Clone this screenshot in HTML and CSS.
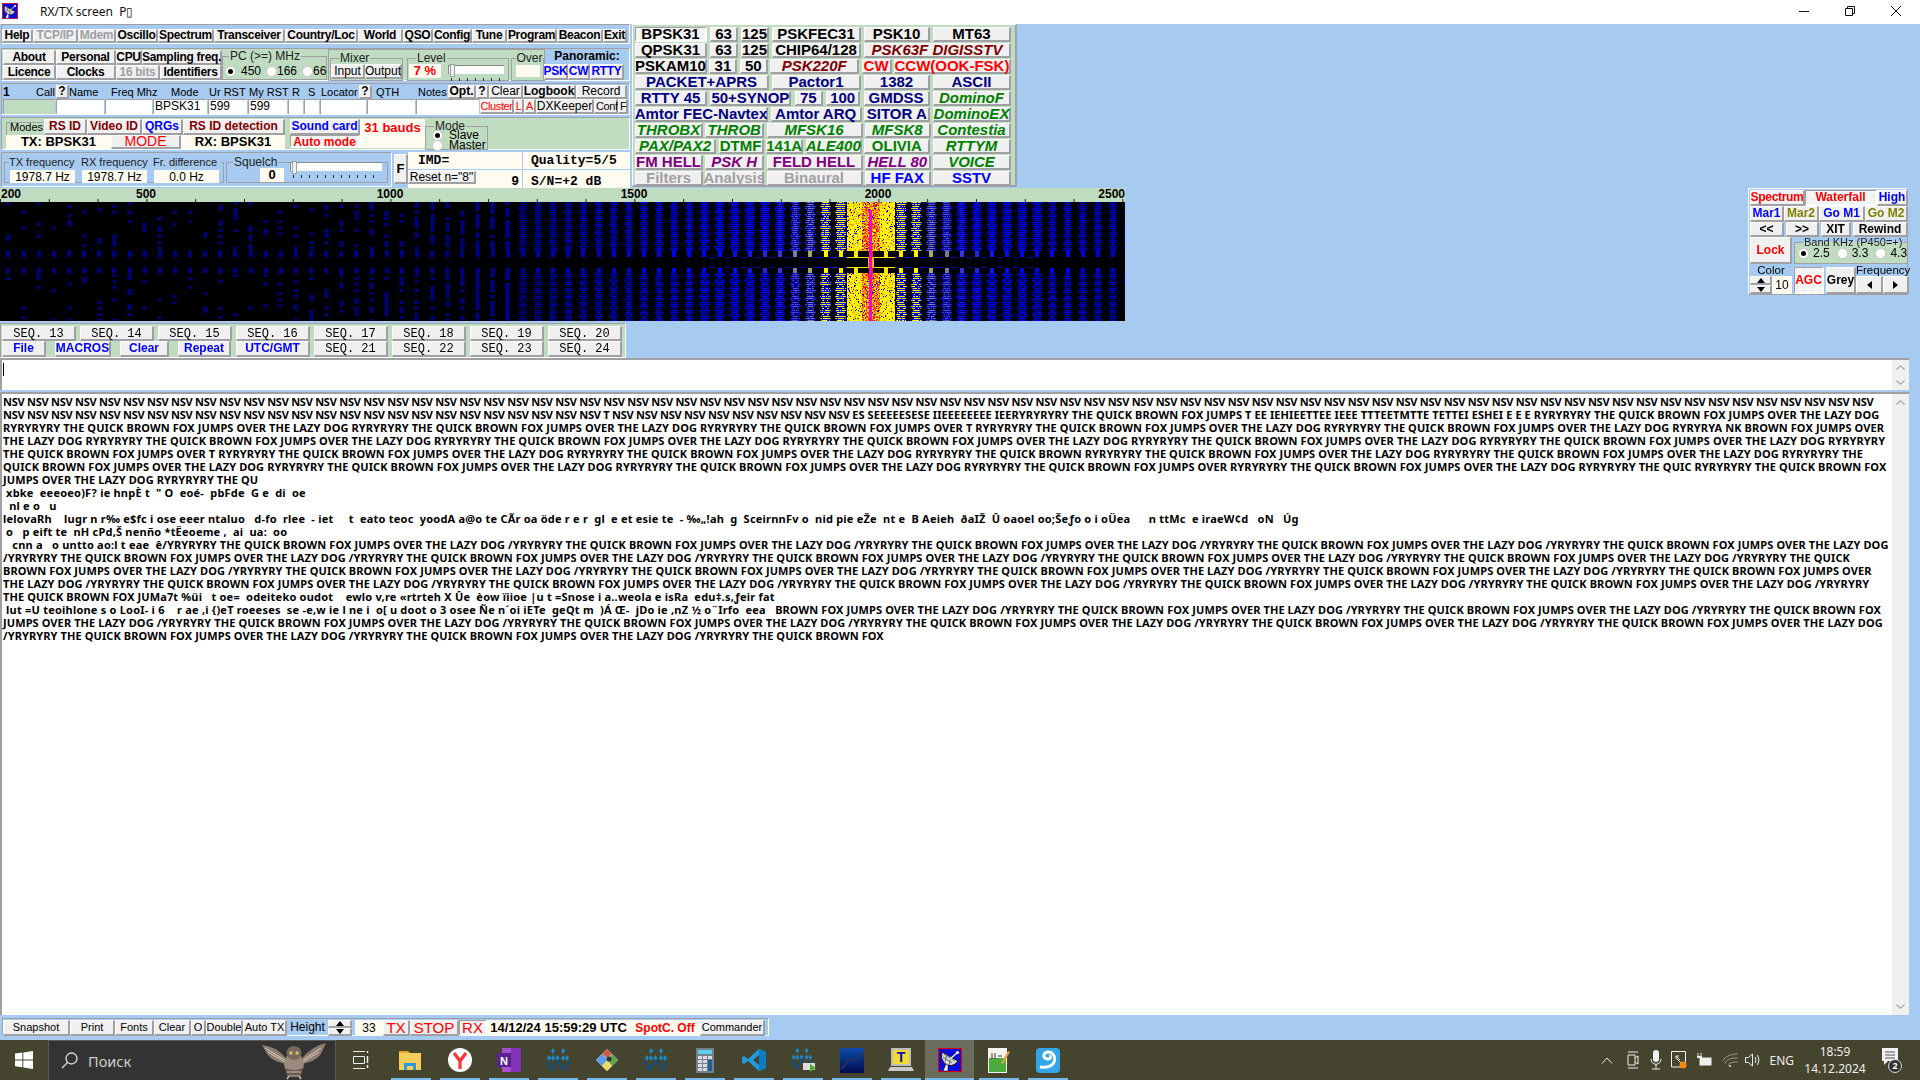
FILE: index.html
```html
<!DOCTYPE html>
<html lang="en">
<head>
<meta charset="utf-8">
<title>RX/TX screen</title>
<link rel="stylesheet" href="styles.css">
</head>
<body>
<svg class="defs" width="0" height="0" aria-hidden="true">
  <symbol id="dish" viewBox="0 0 24 24">
    <rect x="0.5" y="0.5" width="23" height="23" fill="#0c0ce0" stroke="#e00000"/>
    <path d="M4 4 L20 13 Q14 21 6 15 Q2 10 4 4Z" fill="#d8d8d8" stroke="#000" stroke-width=".8"/>
    <path d="M6 6 L17 13 M5 9 L14 15 M9 5 L7 14 M13 8 L11 17" stroke="#555" stroke-width=".8"/>
    <path d="M12 11 L19 5" stroke="#fff" stroke-width="1.2"/>
    <circle cx="19.5" cy="4.5" r="1.6" fill="#fff"/>
    <path d="M8 16 L5 23 H10 L10 18" fill="#fff" stroke="#000" stroke-width=".6"/>
  </symbol>
  <symbol id="wsjt" viewBox="0 0 26 26">
    <g fill="#1e88c8">
      <path d="M8 1l2 3-2 3-2-3zM18 1l2 3-2 3-2-3zM4 8l2 3-2 3-2-3zM8 8l2 3-2 3-2-3zM12.500 8l2 3-2 3-2-3zM18 8l2 3-2 3-2-3zM22 8l2 3-2 3-2-3z"/>
    </g>
    <path d="M1 15l6 10 6-10 6 10 6-10-2-1-4 7-6-9-6 9-4-7z" fill="#0f4f86"/>
  </symbol>
  <symbol id="chev-up" viewBox="0 0 9 5"><path d="M.5 4.500L4.500 .8L8.500 4.500" fill="none" stroke="#a8a8a8" stroke-width="1.200"/></symbol>
  <symbol id="chev-down" viewBox="0 0 9 5"><path d="M.5 .5L4.500 4.200L8.500 .5" fill="none" stroke="#a8a8a8" stroke-width="1.200"/></symbol>
  <symbol id="tri-up" viewBox="0 0 8 5"><path d="M0 5L4 0L8 5Z"/></symbol>
  <symbol id="tri-down" viewBox="0 0 8 5"><path d="M0 0L4 5L8 0Z"/></symbol>
  <symbol id="tri-left" viewBox="0 0 5 8"><path d="M5 0L0 4L5 8Z"/></symbol>
  <symbol id="tri-right" viewBox="0 0 5 8"><path d="M0 0L5 4L0 8Z"/></symbol>
</svg>

<header class="titlebar">
  <svg class="title-icon" width="16" height="16"><use href="#dish"/></svg>
  <span class="title-text">RX/TX screen&nbsp; P▯</span>
  <div class="winctl">
    <svg width="10" height="10" viewBox="0 0 10 10"><path d="M0 5.500H10" stroke="#111"/></svg>
    <svg width="10" height="10" viewBox="0 0 10 10"><path d="M.5 2.500H7.500V9.500H.5ZM2.500 2.500V.5H9.500V7.500H7.500" fill="none" stroke="#111"/></svg>
    <svg width="10" height="10" viewBox="0 0 10 10"><path d="M0 0L10 10M10 0L0 10" stroke="#111"/></svg>
  </div>
</header>

<div class="upper">
  <div class="upper-left">
    <div class="top-row">
      <div class="left-panels">

        <nav class="panel menu-panel">
          <div class="menu-row">
            <button class="b">Help</button><button class="b off">TCP/IP</button><button class="b off">Mdem</button><button class="b">Oscillo</button><button class="b">Spectrum</button><button class="b">Transceiver</button><button class="b">Country/Loc</button><button class="b">World</button><button class="b">QSO</button><button class="b">Config</button><button class="b">Tune</button><button class="b">Program</button><button class="b">Beacon</button><button class="b">Exit</button>
          </div>
        </nav>

        <section class="panel green info-panel">
          <div class="info-btns">
            <div class="info-a"><button class="b">About</button><button class="b">Personal</button><button class="b">CPU</button><button class="b">Sampling freq.</button></div>
            <div class="info-b"><button class="b">Licence</button><button class="b">Clocks</button><button class="b off">16 bits</button><button class="b">Identifiers</button></div>
          </div>
          <fieldset class="grp pc-grp">
            <legend>PC (&gt;=) MHz</legend>
            <div class="radios pc-radios">
              <span class="radio on"></span><span>450</span><span class="radio"></span><span>166</span><span class="radio"></span><span>66</span>
            </div>
          </fieldset>
          <div class="sound-box">
            <fieldset class="grp mixer-grp">
              <legend>Mixer</legend>
              <div class="mixer-btns"><button class="b plain">Input</button><button class="b plain">Output</button></div>
            </fieldset>
            <fieldset class="grp level-grp">
              <legend>Level</legend>
              <div class="level-row">
                <span class="val red level-val">7 %</span>
                <div class="slider level-slider"><i></i></div>
              </div>
            </fieldset>
            <fieldset class="grp over-grp">
              <legend>Over</legend>
              <span class="val over-val"></span>
            </fieldset>
          </div>
          <div class="panoramic">
            <div class="pano-title">Panoramic:</div>
            <div class="pano-btns"><button class="b blue">PSK</button><button class="b blue">CW</button><button class="b blue">RTTY</button></div>
          </div>
        </section>

        <section class="panel log-panel">
          <div class="log-labels">
            <span class="call-cell"><b>1</b><span>Call</span></span><button class="b">?</button><span class="lbl">Name</span><span class="lbl">Freq Mhz</span><span class="lbl">Mode</span><span class="lbl">Ur RST</span><span class="lbl">My RST</span><span class="lbl">R</span><span class="lbl">S</span><span class="lbl">Locator</span><button class="b">?</button><span class="lbl ind">QTH</span><span class="lbl">Notes</span><button class="b">Opt.</button><button class="b">?</button><button class="b plain">Clear</button><button class="b">Logbook</button><button class="b plain">Record</button>
          </div>
          <div class="log-fields">
            <span class="field dim"></span><span class="field"></span><span class="field"></span><span class="field">BPSK31</span><span class="field">599</span><span class="field">599</span><span class="field"></span><span class="field"></span><span class="field"></span><span class="field"></span><span class="field"></span><button class="b plain redt small">Cluster</button><button class="b plain redt small">L</button><button class="b plain redt small">A</button><button class="b plain">DXKeeper</button><button class="b plain left small">Conf</button><button class="b plain left small">F</button>
          </div>
        </section>

        <section class="panel green mode-panel">
          <div class="mode-a">
            <div class="mode-a1">
              <span class="modes-lbl">Modes</span><button class="b maroon">RS ID</button><button class="b maroon">Video ID</button><button class="b blue">QRGs</button><button class="b maroon">RS ID detection</button>
            </div>
            <div class="mode-a2">
              <span class="val strong">TX: BPSK31</span><button class="b plain redt big">MODE</button><span class="val strong">RX: BPSK31</span>
            </div>
          </div>
          <div class="mode-b">
            <button class="b blue">Sound card</button><span class="val red strong pushed">31 bauds</span>
            <button class="b pressed redt">Auto mode</button><span class="val"></span>
          </div>
          <fieldset class="grp mode-grp">
            <legend>Mode</legend>
            <div class="radios col"><span class="radline"><span class="radio on"></span>Slave</span><span class="radline"><span class="radio"></span>Master</span></div>
          </fieldset>
        </section>

        <section class="tx-row">
          <div class="panel tx-panel">
            <fieldset class="grp freq-grp">
              <legend class="freq-legend"><span>TX frequency</span><span>RX frequency</span><span>Fr. difference</span></legend>
              <div class="freq-vals"><span class="val">1978.7 Hz</span><span class="val">1978.7 Hz</span><span class="val">0.0 Hz</span></div>
            </fieldset>
            <fieldset class="grp squelch-grp">
              <legend>Squelch</legend>
              <div class="squelch-row"><span class="val strong">0</span><div class="slider squelch-slider"><i></i></div></div>
            </fieldset>
          </div>
          <button class="b f-btn">F</button>
          <div class="imd">
            <span class="val mono imd-a">IMD=</span><span class="val mono imd-b">Quality=5/5</span>
            <div class="imd-c"><button class="b plain">Reset n="8"</button><span class="val mono nine">9</span></div><span class="val mono imd-b imd-low">S/N=+2 dB</span>
          </div>
        </section>
      </div>

      <section class="mode-grid">
        <div class="mg r1"><button class="b k pressed">BPSK31</button><button class="b k">63</button><button class="b k">125</button><button class="b k">PSKFEC31</button><button class="b k">PSK10</button><button class="b k">MT63</button></div>
        <div class="mg r2"><button class="b k">QPSK31</button><button class="b k">63</button><button class="b k">125</button><button class="b k">CHIP64/128</button><button class="b dr it">PSK63F DIGISSTV</button></div>
        <div class="mg r3"><button class="b k">PSKAM10</button><button class="b k">31</button><button class="b k">50</button><button class="b dr it">PSK220F</button><button class="b rd">CW</button><button class="b rd">CCW(OOK-FSK)</button></div>
        <div class="mg r4"><button class="b nv">PACKET+APRS</button><button class="b nv">Pactor1</button><button class="b nv">1382</button><button class="b nv">ASCII</button></div>
        <div class="mg r5"><button class="b nv">RTTY 45</button><button class="b nv">50+SYNOP</button><button class="b nv">75</button><button class="b nv">100</button><button class="b nv">GMDSS</button><button class="b gr it">DominoF</button></div>
        <div class="mg r6"><button class="b nv">Amtor FEC-Navtex</button><button class="b nv">Amtor ARQ</button><button class="b nv">SITOR A</button><button class="b gr it">DominoEX</button></div>
        <div class="mg r7"><button class="b gr it">THROBX</button><button class="b gr it">THROB</button><button class="b gr it">MFSK16</button><button class="b gr it">MFSK8</button><button class="b gr it">Contestia</button></div>
        <div class="mg r8"><button class="b gr it">PAX/PAX2</button><button class="b gr">DTMF</button><button class="b gr">141A</button><button class="b gr it">ALE400</button><button class="b gr">OLIVIA</button><button class="b gr it">RTTYM</button></div>
        <div class="mg r7"><button class="b pu">FM HELL</button><button class="b pu it">PSK H</button><button class="b pu">FELD HELL</button><button class="b pu it">HELL 80</button><button class="b gr it">VOICE</button></div>
        <div class="mg r7"><button class="b gy">Filters</button><button class="b gy">Analysis</button><button class="b gy">Binaural</button><button class="b bl">HF FAX</button><button class="b bl">SSTV</button></div>
      </section>
    </div>

    <div class="ruler">
      <span class="r0">200</span><span class="rc">500</span><span class="rc">1000</span><span class="rc">1500</span><span class="rc">2000</span><span class="rl">2500</span>
    </div>
    <canvas id="wf" class="waterfall" width="1125" height="119"></canvas>

    <section class="panel green seq-panel">
      <div class="seq1">
        <button class="b seq">SEQ. 13</button><button class="b seq">SEQ. 14</button><button class="b seq">SEQ. 15</button><button class="b seq">SEQ. 16</button><button class="b seq">SEQ. 17</button><button class="b seq">SEQ. 18</button><button class="b seq">SEQ. 19</button><button class="b seq">SEQ. 20</button>
      </div>
      <div class="seq2">
        <button class="b blue">File</button><button class="b blue">MACROS</button><button class="b blue">Clear</button><button class="b blue">Repeat</button><button class="b blue">UTC/GMT</button><button class="b seq">SEQ. 21</button><button class="b seq">SEQ. 22</button><button class="b seq">SEQ. 23</button><button class="b seq">SEQ. 24</button>
      </div>
    </section>
  </div>

  <aside class="side">
    <div class="side-box">
      <div class="s1"><button class="b redt">Spectrum</button><button class="b redt pressed">Waterfall</button><button class="b blue">High</button></div>
      <div class="s2"><button class="b blue">Mar1</button><button class="b olive">Mar2</button><button class="b blue">Go M1</button><button class="b olive">Go M2</button></div>
      <div class="s3"><button class="b">&lt;&lt;</button><button class="b">&gt;&gt;</button><button class="b">XIT</button><button class="b">Rewind</button></div>
      <div class="s4">
        <button class="b redt lock">Lock</button>
        <fieldset class="grp band-grp">
          <legend>Band KHz (P450=+)</legend>
          <div class="radios band-radios"><span class="radio on"></span><span>2.5</span><span class="radio"></span><span>3.3</span><span class="radio"></span><span>4.3</span></div>
        </fieldset>
      </div>
      <div class="s5">
        <div class="color-block">
          <span class="cap">Color</span>
          <div class="color-row"><div class="spin"><button class="b"><svg width="8" height="5"><use href="#tri-up"/></svg></button><button class="b"><svg width="8" height="5"><use href="#tri-down"/></svg></button></div><span class="val ten">10</span></div>
        </div>
        <button class="b pressed redt agc">AGC</button>
        <button class="b grey">Grey</button>
        <div class="freq-block">
          <span class="cap">Frequency</span>
          <div class="freq-btns"><button class="b"><svg width="5" height="8"><use href="#tri-left"/></svg></button><button class="b"><svg width="5" height="8"><use href="#tri-right"/></svg></button></div>
        </div>
      </div>
    </div>
  </aside>
</div>

<div class="memo input-memo">
  <div class="memo-body"><i class="caret"></i></div>
  <div class="scroll input-scroll"><svg width="9" height="5"><use href="#chev-up"/></svg><svg width="9" height="5"><use href="#chev-down"/></svg></div>
</div>

<div class="memo log-memo">
<pre class="memo-body log"><span class="nsv">NSV NSV NSV NSV NSV NSV NSV NSV NSV NSV NSV NSV NSV NSV NSV NSV NSV NSV NSV NSV NSV NSV NSV NSV NSV NSV NSV NSV NSV NSV NSV NSV NSV NSV NSV NSV NSV NSV NSV NSV NSV NSV NSV NSV NSV NSV NSV NSV NSV NSV NSV NSV NSV NSV NSV NSV NSV NSV NSV NSV NSV NSV NSV NSV NSV NSV NSV NSV NSV NSV NSV NSV NSV NSV NSV NSV NSV NSV</span>
<span class="nsv">NSV NSV NSV NSV NSV NSV NSV NSV NSV NSV NSV NSV NSV NSV NSV NSV NSV NSV NSV NSV NSV NSV NSV NSV NSV T NSV NSV NSV NSV NSV NSV NSV NSV NSV NSV </span>ES SEEEEESESE IIEEEEEEEE IEERYRYRYRY THE QUICK BROWN FOX JUMPS T EE IEHIEETTEE IEEE TTTEETMTTE TETTEI ESHEI E E E RYRYRYRY THE QUICK BROWN FOX JUMPS OVER THE LAZY DOG
RYRYRYRY THE QUICK BROWN FOX JUMPS OVER THE LAZY DOG RYRYRYRY THE QUICK BROWN FOX JUMPS OVER THE LAZY DOG RYRYRYRY THE QUICK BROWN FOX JUMPS OVER T RYRYRYRY THE QUICK BROWN FOX JUMPS OVER THE LAZY DOG RYRYRYRY THE QUICK BROWN FOX JUMPS OVER THE LAZY DOG RYRYRYA NK BROWN FOX JUMPS OVER
THE LAZY DOG RYRYRYRY THE QUICK BROWN FOX JUMPS OVER THE LAZY DOG RYRYRYRY THE QUICK BROWN FOX JUMPS OVER THE LAZY DOG RYRYRYRY THE QUICK BROWN FOX JUMPS OVER THE LAZY DOG RYRYRYRY THE QUICK BROWN FOX JUMPS OVER THE LAZY DOG RYRYRYRY THE QUICK BROWN FOX JUMPS OVER THE LAZY DOG RYRYRYRY
THE QUICK BROWN FOX JUMPS OVER T RYRYRYRY THE QUICK BROWN FOX JUMPS OVER THE LAZY DOG RYRYRYRY THE QUICK BROWN FOX JUMPS OVER THE LAZY DOG RYRYRYRY THE QUICK BROWN RYRYRYRY THE QUICK BROWN FOX JUMPS OVER THE LAZY DOG RYRYRYRY THE QUICK BROWN FOX JUMPS OVER THE LAZY DOG RYRYRYRY THE
QUICK BROWN FOX JUMPS OVER THE LAZY DOG RYRYRYRY THE QUICK BROWN FOX JUMPS OVER THE LAZY DOG RYRYRYRY THE QUICK BROWN FOX JUMPS OVER THE LAZY DOG RYRYRYRY THE QUICK BROWN FOX JUMPS OVER RYRYRYRY THE QUICK BROWN FOX JUMPS OVER THE LAZY DOG RYRYRYRY THE QUIC RYRYRYRY THE QUICK BROWN FOX
JUMPS OVER THE LAZY DOG RYRYRYRY THE QU
<span class="garb"> xbke  eeeoeo)F? ie hnpÈ t  " O  eoé-  pbFde  G e  di  oe</span>
<span class="garb">  nl e o   u</span>
<span class="garb">lelovaRh    lugr n r‰ e$fc i ose eeer ntaluo   d-fo  rlee  - iet     t  eato teoc  yoodA a@o te CÃr oa öde r e r  gl  e et esie te  - ‰„!ah  g  SceirnnFv o  nid pie eŽe  nt e  B Aeieh  ðaIŽ  Û oaoel oo;Šeƒo o i oÜea      n ttMc  e ìraeW¢d   oN   Úg</span>
<span class="garb"> o   p eift te  nH cPd,Š nenño *tËeoeme ,  ai  ua:  oo</span>
<span class="garb">   cnn a   o untto ao:l t eae  ê</span>/YRYRYRY THE QUICK BROWN FOX JUMPS OVER THE LAZY DOG /YRYRYRY THE QUICK BROWN FOX JUMPS OVER THE LAZY DOG /YRYRYRY THE QUICK BROWN FOX JUMPS OVER THE LAZY DOG /YRYRYRY THE QUICK BROWN FOX JUMPS OVER THE LAZY DOG /YRYRYRY THE QUICK BROWN FOX JUMPS OVER THE LAZY DOG
/YRYRYRY THE QUICK BROWN FOX JUMPS OVER THE LAZY DOG /YRYRYRY THE QUICK BROWN FOX JUMPS OVER THE LAZY DOG /YRYRYRY THE QUICK BROWN FOX JUMPS OVER THE LAZY DOG /YRYRYRY THE QUICK BROWN FOX JUMPS OVER THE LAZY DOG /YRYRYRY THE QUICK BROWN FOX JUMPS OVER THE LAZY DOG /YRYRYRY THE QUICK
BROWN FOX JUMPS OVER THE LAZY DOG /YRYRYRY THE QUICK BROWN FOX JUMPS OVER THE LAZY DOG /YRYRYRY THE QUICK BROWN FOX JUMPS OVER THE LAZY DOG /YRYRYRY THE QUICK BROWN FOX JUMPS OVER THE LAZY DOG /YRYRYRY THE QUICK BROWN FOX JUMPS OVER THE LAZY DOG /YRYRYRY THE QUICK BROWN FOX JUMPS OVER
THE LAZY DOG /YRYRYRY THE QUICK BROWN FOX JUMPS OVER THE LAZY DOG /YRYRYRY THE QUICK BROWN FOX JUMPS OVER THE LAZY DOG /YRYRYRY THE QUICK BROWN FOX JUMPS OVER THE LAZY DOG /YRYRYRY THE QUICK BROWN FOX JUMPS OVER THE LAZY DOG /YRYRYRY THE QUICK BROWN FOX JUMPS OVER THE LAZY DOG /YRYRYRY
THE QUICK BROWN FOX JUMa7t <span class="garb">%üi   t oe=  odeiteko oudot    ewlo v,re «rtrteh X Ûe  èow ïiioe |u t =Snose i a..weola e isRa  edu‡.s,ƒeir fat</span>
<span class="garb"> lut =U teoihlone s o LooI- i 6    r ae ,i {)eT roeeses  se -e,w ie l ne i  o[ u doot o 3 osee Ñe n´oi iETe  geQt m  )Á Œ-  jDo ie ,nZ ½ o¨Irfo  eea   </span>BROWN FOX JUMPS OVER THE LAZY DOG /YRYRYRY THE QUICK BROWN FOX JUMPS OVER THE LAZY DOG /YRYRYRY THE QUICK BROWN FOX JUMPS OVER THE LAZY DOG /YRYRYRY THE QUICK BROWN FOX
JUMPS OVER THE LAZY DOG /YRYRYRY THE QUICK BROWN FOX JUMPS OVER THE LAZY DOG /YRYRYRY THE QUICK BROWN FOX JUMPS OVER THE LAZY DOG /YRYRYRY THE QUICK BROWN FOX JUMPS OVER THE LAZY DOG /YRYRYRY THE QUICK BROWN FOX JUMPS OVER THE LAZY DOG /YRYRYRY THE QUICK BROWN FOX JUMPS OVER THE LAZY DOG
/YRYRYRY THE QUICK BROWN FOX JUMPS OVER THE LAZY DOG /YRYRYRY THE QUICK BROWN FOX JUMPS OVER THE LAZY DOG /YRYRYRY THE QUICK BROWN FOX</pre>
  <div class="scroll log-scroll"><svg width="9" height="5"><use href="#chev-up"/></svg><svg width="9" height="5"><use href="#chev-down"/></svg></div>
</div>

<footer class="panel bottom-bar">
  <button class="b plain">Snapshot</button><button class="b plain">Print</button><button class="b plain">Fonts</button><button class="b plain">Clear</button><button class="b plain">O</button><button class="b plain">Double</button><button class="b plain">Auto TX</button><span class="height-lbl">Height</span><div class="spin h-spin"><button class="b"><svg width="8" height="5"><use href="#tri-up"/></svg></button><button class="b"><svg width="8" height="5"><use href="#tri-down"/></svg></button></div><span class="val plainval">33</span><button class="b plain redt big2">TX</button><button class="b plain redt big2">STOP</button><button class="b plain pressed redt big2">RX</button><span class="val strong date">14/12/24 15:59:29 UTC</span><span class="val red strong spot">SpotC. Off</span><button class="b plain">Commander</button>
</footer>

<div class="taskbar">
  <div class="start"><svg width="18" height="18" viewBox="0 0 18 18"><path fill="#fff" d="M0 2.600L7.400 1.600V8.400H0ZM8.300 1.500L18 0V8.400H8.300ZM0 9.400H7.400V16.300L0 15.300ZM8.300 9.400H18V18L8.300 16.500Z"/></svg></div>
  <div class="search">
    <svg width="17" height="17" viewBox="0 0 17 17"><circle cx="10.500" cy="6.500" r="5.500" fill="none" stroke="#ddd" stroke-width="1.300"/><path d="M6.500 10.500L1 16" stroke="#ddd" stroke-width="1.300"/></svg>
    <span class="search-text">Поиск</span>
    <svg class="owl" width="66" height="38" viewBox="0 0 66 38">
      <path d="M1 3 Q14 4 24 15 L26 22 Q12 20 6 12Z" fill="#8d7c70"/>
      <path d="M65 1 Q52 4 42 15 L40 22 Q54 20 60 12Z" fill="#8d7c70"/>
      <path d="M4 6 L24 18 M7 10 L24 20 M60 6 L42 18 M58 10 L42 20" stroke="#d8cdc0" stroke-width="1"/>
      <ellipse cx="33" cy="22" rx="10" ry="11" fill="#9b8a7e"/>
      <ellipse cx="33" cy="11" rx="7.500" ry="7" fill="#776a5c"/>
      <circle cx="30" cy="11" r="1.700" fill="#d8c060"/><circle cx="36" cy="11" r="1.700" fill="#d8c060"/>
      <path d="M24 26 Q33 30 42 26 L40 34 H26Z" fill="#6a5a50"/>
      <path d="M26 30H40M28 34H38" stroke="#cbbfb3"/>
      <path d="M28 34 L26 37 M38 34 L40 37" stroke="#cbbfb3" stroke-width="1.500"/>
    </svg>
  </div>
  <div class="tview"><svg width="16" height="18" viewBox="0 0 16 18"><path d="M0 .5H12M0 17.500H12M.5 5.500H11.500V12.500H.5Z" fill="none" stroke="#eee"/><path d="M14.500 0V2M14.500 5V12M14.500 14V17" stroke="#eee" stroke-width="1.500"/></svg></div>

  <div class="slot"><svg width="24" height="22" viewBox="0 0 24 22"><path d="M0 2H9L11 4H0Z" fill="#e2a52d"/><rect y="4" width="22" height="17" fill="#f4cd5a"/><rect x="5" y="14" width="12" height="7" fill="#2b9ae0"/><rect x="8" y="17" width="6" height="4" fill="#f4cd5a"/></svg></div>
  <div class="slot"><svg width="24" height="24" viewBox="0 0 24 24"><circle cx="12" cy="12" r="12" fill="#fff"/><path d="M6 5L12 13L18 5M12 13V21" fill="none" stroke="#f33" stroke-width="3.200"/></svg></div>
  <div class="slot"><svg width="24" height="24" viewBox="0 0 24 24"><rect x="5" y="0" width="19" height="24" fill="#a64ed0"/><rect x="14" y="0" width="10" height="24" fill="#8332b8"/><rect y="5" width="14" height="14" fill="#5b1f91"/><text class="onenote" x="7" y="16.500" text-anchor="middle">N</text></svg></div>
  <div class="slot"><svg width="26" height="26"><use href="#wsjt"/></svg></div>
  <div class="slot"><svg width="24" height="24" viewBox="0 0 24 24"><path d="M12 1L23 12L12 23L1 12Z" fill="#e6e6e6"/><path d="M1 12L7 6L13 12L7 18Z" fill="#5a9fe6"/><path d="M7 6L12 1L17 6L12 10Z" fill="#d05a50"/><path d="M12 12L17 6L23 12L17 18Z" fill="#5caa4a"/><path d="M7 18L12 12L17 18L12 23Z" fill="#f0d868"/><circle cx="14" cy="11" r="2.500" fill="#333"/></svg></div>
  <div class="slot"><svg width="26" height="26"><use href="#wsjt"/></svg></div>
  <div class="slot"><svg width="18" height="25" viewBox="0 0 18 25"><rect width="18" height="25" rx="1" fill="#75808a"/><rect x="2" y="2" width="14" height="4" fill="#5fd0ea"/><path d="M2 8H6V11H2ZM7 8H11V11H7ZM12 8H16V11H12ZM2 12H6V15H2ZM7 12H11V15H7ZM2 16H6V19H2ZM7 16H11V19H7ZM2 20H6V23H2ZM7 20H11V23H7Z" fill="#d8dde0"/><rect x="12" y="12" width="4" height="11" fill="#1f5f9f"/></svg></div>
  <div class="slot"><svg width="24" height="24" viewBox="0 0 24 24"><path d="M17 1L24 4V20L17 23L6 13L2 16L0 15V9L2 8L6 11ZM17 7L11 12L17 17Z" fill="#1f9be0"/><path d="M17 1L24 4V20L17 23Z" fill="#0d7cc4"/></svg></div>
  <div class="slot"><svg width="26" height="26" viewBox="0 0 26 26"><use href="#wsjt" width="24" height="24"/><rect x="13" y="16" width="12" height="7" fill="#ddd"/><path d="M20 17L26 21L20 25Z" fill="#4bae2a"/></svg></div>
  <div class="slot"><svg width="24" height="25" viewBox="0 0 24 25"><defs><linearGradient id="gsig" x1="0" y1="0" x2="0" y2="1"><stop offset="0" stop-color="#0c4ca8"/><stop offset="1" stop-color="#000a50"/></linearGradient></defs><rect width="24" height="25" fill="url(#gsig)"/><path d="M1 20C6 20 6 8 12 12S18 4 23 5" fill="none" stroke="#23345f" stroke-width="2"/></svg></div>
  <div class="slot"><svg width="26" height="24" viewBox="0 0 26 24"><path d="M3 0H23V18H3Z" fill="#bcbcbc"/><rect x="5" y="2" width="16" height="14" fill="#f2dc2c"/><text class="tee" x="13" y="14" text-anchor="middle">T</text><path d="M2 19H24L26 23H0Z" fill="#c8c8c8"/></svg></div>
  <div class="slot active"><svg width="24" height="24"><use href="#dish"/></svg></div>
  <div class="slot"><svg width="24" height="25" viewBox="0 0 24 25"><path d="M1 0H20V25H1Z" fill="#f5f5f0"/><path d="M2 10H19V24H2Z" fill="#4cab3c"/><path d="M5 5V11M8 5V11M11 8H15" stroke="#333"/><path d="M14 15L21 3L23 4L16 16Z" fill="#e2a13a"/></svg></div>
  <div class="slot"><svg width="24" height="25" viewBox="0 0 24 25"><rect width="24" height="25" rx="4" fill="#33a6e8"/><path d="M4 19C22 22 22 4 12 4C7 4 6 11 12 11C15 11 15 8 13 8" fill="none" stroke="#fff" stroke-width="3"/></svg></div>

  <div class="tray">
    <svg class="t-up" width="12" height="7" viewBox="0 0 12 7"><path d="M1 6.500L6 1L11 6.500" fill="none" stroke="#eee"/></svg>
    <svg class="t-cam" width="12" height="20" viewBox="0 0 12 20"><path d="M1 2H11M1 18H11M1 5H8V15H1ZM8 8L11 6V14L8 12" fill="none" stroke="#eee"/></svg>
    <svg class="t-mic" width="12" height="20" viewBox="0 0 12 20"><rect x="3" y="0" width="6" height="12" rx="3" fill="#f0f0f0"/><path d="M1 9C1 16 11 16 11 9M6 14V19M2 19H10" fill="none" stroke="#eee"/></svg>
    <svg class="t-rec" width="18" height="20" viewBox="0 0 18 20"><path d="M.5 1.500H14.500V17H.5Z" fill="none" stroke="#eee"/><path d="M5 6L9 10M5 6V9M5 6H8M10 13L6 9" fill="none" stroke="#eee"/><circle cx="12" cy="15" r="3.500" fill="#f08a10"/></svg>
    <svg class="t-bat" width="16" height="14" viewBox="0 0 16 14"><path d="M1 0V3M4 0V3" stroke="#eee"/><rect x="2.500" y="4.500" width="12" height="8" fill="#eee"/><path d="M0 3H5V5H0Z" fill="#eee"/></svg>
    <svg class="t-wifi" width="16" height="14" viewBox="0 0 16 14"><path d="M.5 8C4 2 12 1 15.500 1M3 10.500C5 6 9 5 15.500 5M6 12C7 10 10 9 15.500 9" fill="none" stroke="#999"/><circle cx="8" cy="13" r="1" fill="#eee"/></svg>
    <svg class="t-vol" width="16" height="16" viewBox="0 0 16 16"><path d="M.5 5.500H3.500L7.500 2V14L3.500 10.500H.5Z" fill="none" stroke="#eee"/><path d="M10 5Q12 8 10 11M12.500 3Q15.500 8 12.500 13" fill="none" stroke="#eee"/></svg>
    <span class="t-lang">ENG</span>
    <span class="t-clock"><span>18:59</span><span>14.12.2024</span></span>
    <span class="t-note">
      <svg width="16" height="18" viewBox="0 0 16 18"><path d="M0 0H16V13H6L2 17V13H0Z" fill="#f2f2f2"/><path d="M3 4H13M3 7H13M3 10H13" stroke="#555"/></svg>
      <span class="badge">2</span>
    </span>
  </div>
</div>
<script src="waterfall.js"></script>
</body>
</html>
```
FILE: styles.css
```css
* { box-sizing: border-box; }
html, body { margin: 0; padding: 0; }
body {
  width: 1920px; height: 1080px; overflow: hidden;
  background: #a6caf0;
  display: flex; flex-direction: column;
  font: 11px "Liberation Sans", Arial, sans-serif; color: #000;
}
.defs { position: absolute; }

/* title */
.titlebar { height: 24px; flex: none; background: #fff; display: flex; align-items: center; padding: 0 0 2px 2px; }
.title-text { margin-left: 22px; font: 12px "Noto Sans", sans-serif; color: #111; }
.winctl { margin-left: auto; display: flex; gap: 36px; padding-right: 19px; }

/* generic widgets */
.b {
  margin: 0; padding: 0; min-width: 0; overflow: visible; white-space: nowrap;
  display: flex; align-items: center; justify-content: center;
  background: #f0f0f0; color: #000;
  border-style: solid; border-width: 1px 2px 2px 1px;
  border-color: #fff #a0a0a4 #a0a0a4 #fff;
  font: bold 12px/11px "Liberation Sans", Arial, sans-serif;
}
.b.plain { font-weight: normal; }
.b.small { font-size: 11px; letter-spacing: -.4px; }
.b.off { color: #a0a0a4; }
.b.blue { color: #0000ff; }
.b.maroon { color: #800000; }
.b.olive { color: #808000; }
.b.redt { color: #ff0000; }
.b.left { justify-content: flex-start; padding-left: 1px; }
.b.pressed {
  border-color: #a0a0a4 #fff #fff #a0a0a4;
  background: repeating-conic-gradient(#fff 0 25%, #ececec 0 50%) 0 0 / 2px 2px;
}
.panel {
  border: 1px solid; border-color: #a0a0a4 #fff #fff #a0a0a4;
  background: #a6caf0;
}
.green { background: #c0dcc0; }
.grp { margin: 0; padding: 0; min-width: 0; border: 1px solid #a0a0a4; }
.grp > legend { padding: 0 1px; margin-left: 6px; font: 12px/12px "Liberation Sans", Arial, sans-serif; color: #222; }
.val {
  background: #fffbf0; display: flex; align-items: center; justify-content: center;
  font: 12px/12px "Liberation Sans", Arial, sans-serif; white-space: nowrap;
}
.val.red { color: #ff0000; }
.val.strong { font-weight: bold; font-size: 13px; }
.pushed { padding-top: 2px; }
.radio {
  width: 11px; height: 11px; border-radius: 50%; flex: none;
  background: #fff; border: 1px solid #c8c8c8;
  display: inline-flex; align-items: center; justify-content: center;
}
.radio.on::after { content: ""; width: 5px; height: 5px; border-radius: 50%; background: #000; }
.radios { display: flex; align-items: center; font: 12px/12px "Liberation Sans", Arial, sans-serif; }
.slider { position: relative; background: #fff; border-top: 1px solid #888; border-left: 1px solid #888; height: 9px; }
.slider i { position: absolute; left: 1px; top: -2px; width: 5px; height: 13px; background: #f0f0f0; border: 1px solid #a0a0a4; }
.slider::after {
  content: ""; position: absolute; left: 2px; right: 2px; top: 12px; height: 3px;
  background: repeating-linear-gradient(90deg, #333 0 1px, transparent 1px 8px);
}

/* layout */
.upper { display: flex; height: 334px; flex: none; }
.upper-left { width: 1125px; flex: none; }
.top-row { display: flex; height: 164px; }
.left-panels { width: 629px; margin-left: 1px; display: flex; flex-direction: column; }

.menu-panel { height: 20px; padding-top: 4px; }
.menu-row { display: grid; grid-template-columns: 31px 45px 38px 42px 56px 71px 73px 45px 30px 39px 35px 50px 46px 24px; height: 14px; }
.menu-row .b, .info-btns .b { letter-spacing: -.3px; }

.info-panel { height: 33px; margin-top: 4px; display: flex; }
.info-btns { width: 220px; padding: 1px 0 0 1px; flex: none; }
.info-a, .info-b { display: grid; height: 15px; }
.info-a { grid-template-columns: 53px 60px 26px 80px; }
.info-b { grid-template-columns: 53px 60px 44px 62px; }
.pc-grp { width: 105px; flex: none; height: 30px; margin-top: 1px; }
.pc-radios { display: grid; grid-template-columns: 16px 25px 11px 25px 11px auto; padding: 3px 0 0 2px; }
.sound-box { width: 217px; flex: none; margin-left: 1px; height: 32px; border: 1px solid #a0a0a4; border-bottom: 0; display: flex; gap: 2px; padding: 2px 0 0 1px; }
.mixer-grp { width: 74px; height: 29px; }
.mixer-grp > legend, .level-grp > legend { margin-left: 8px; }
.over-grp > legend { margin-left: 4px; padding: 0; }
.mixer-btns { display: grid; grid-template-columns: 34px 37px; height: 15px; }
.level-grp { width: 104px; height: 29px; margin-left: 2px; }
.level-row { display: flex; gap: 7px; padding-left: 1px; }
.level-val { width: 32px; height: 14px; font-weight: bold; font-size: 13px; }
.level-slider { width: 56px; margin-top: 1px; }
.over-grp { width: 33px; height: 29px; }
.over-val { width: 24px; height: 12px; margin: 1px 0 0 4px; }
.panoramic { flex: 1; background: #a6caf0; }
.pano-title { height: 15px; background: #a6caf0; text-align: center; font: bold 12px/15px "Liberation Sans", Arial, sans-serif; }
.pano-btns { display: grid; grid-template-columns: 24px 22px 34px; height: 16px; margin-left: -1px; }
.pano-btns .b { letter-spacing: -.3px; }

.log-panel { height: 32px; margin-top: 2px; padding: 1px 0 0 1px; }
.log-labels { display: grid; grid-template-columns: 53px 13px 42px 60px 38px 40px 43px 16px 13px 38px 13px 46px 30px 28px 13px 34px 53px 51px; height: 14px; }
.call-cell { display: flex; justify-content: space-between; padding-right: 1px; font: 11px/14px "Liberation Sans", Arial, sans-serif; }
.call-cell b { font-size: 12px; }
.lbl { font: 11px/14px "Liberation Sans", Arial, sans-serif; white-space: nowrap; }
.ind { padding-left: 4px; }
.log-fields { display: grid; grid-template-columns: 53px 49px 48px 55px 40px 40px 16px 16px 47px 49px 64px 34px 10px 12px 58px 24px 10px; height: 15px; }
.field { background: #fff; margin-right: 1px; border-top: 1px solid #a0a0a4; border-left: 1px solid #a0a0a4; font: 12px/13px "Liberation Sans", Arial, sans-serif; padding-left: 1px; overflow: hidden; }
.field.dim { background: #c0dcc0; }

.mode-panel { height: 33px; margin-top: 2px; padding: 1px 0 0 4px; display: flex; }
.mode-a { width: 279px; flex: none; }
.mode-a1 { display: grid; grid-template-columns: 38px 43px 55px 41px 102px; height: 16px; }
.mode-a2 { display: grid; grid-template-columns: 105px 70px 104px; height: 13px; }
.modes-lbl { font: 11px/9px "Liberation Sans", Arial, sans-serif; padding-left: 3px; border-top: 1px solid #a0a0a4; border-left: 1px solid #a0a0a4; margin-top: 3px; height: 13px; white-space: nowrap; }
.big { font-size: 14px; }
.mode-b { width: 135px; margin-left: 5px; flex: none; display: grid; grid-template-columns: 70px 65px; grid-template-rows: 16px 13px; }
.mode-b .pressed { padding-top: 2px; }
.mode-grp { width: 63px; height: 28px; margin-top: 3px; }
.mode-grp > legend { margin-left: 8px; line-height: 8px; }
.col { flex-direction: column; align-items: flex-start; padding-left: 6px; }
.radline { display: flex; gap: 6px; align-items: center; height: 10px; }

.tx-row { display: flex; height: 35px; margin-top: 2px; }
.tx-panel { width: 391px; padding: 3px 0 0 2px; display: flex; gap: 1px; }
.freq-grp { width: 220px; height: 27px; }
.grp > .freq-legend { display: flex; width: 212px; margin-left: 4px; padding: 0; white-space: nowrap; font-size: 11px; }
.freq-legend span { width: 72px; flex: none; background: #a6caf0; }
.freq-legend span:last-child { width: 68px; }
.freq-vals { display: grid; grid-template-columns: 65px 65px 65px; column-gap: 7px; padding: 2px 0 0 5px; }
.freq-vals .val { height: 13px; }
.squelch-grp { width: 162px; height: 27px; margin-left: 1px; }
.squelch-row { display: flex; gap: 6px; padding: 0 0 0 33px; }
.squelch-row .val { width: 24px; height: 14px; }
.squelch-slider { width: 92px; margin-top: -6px; }
.f-btn { width: 14px; height: 30px; margin: 2px 0 0 2px; font-size: 13px; }
.imd { width: 221px; display: grid; grid-template-columns: 114px 107px; grid-template-rows: 17px 18px; column-gap: 1px; row-gap: 1px; }
.mono { font: bold 13px/13px "Liberation Mono", "Courier New", monospace; justify-content: flex-start; padding-left: 8px; }
.imd-a { padding-left: 10px; }
.imd-low { align-items: flex-end; }
.imd-c { display: grid; grid-template-columns: 68px 46px; background: #fffbf0; padding-top: 1px; }
.imd-c .b { height: 13px; font-size: 12px; line-height: 9px; }
.nine { justify-content: flex-end; padding: 0 3px 0 0; align-items: flex-end; }

/* mode grid */
.mode-grid {
  width: 385px; margin-left: 2px; height: 163px;
  background: #c0dcc0; padding: 2px 7px 0 2px;
  border-style: solid; border-width: 1px 2px 2px 1px; border-color: #fff #a0a0a4 #a0a0a4 #fff;
  display: flex; flex-direction: column; gap: 1px;
}
.mg { display: grid; height: 15px; justify-content: space-between; width: 376px; }
.mg .b { font-size: 15px; line-height: 12px; }
.r1 { grid-template-columns: 72px 28px 28px 89px 66px 78px; }
.r2 { grid-template-columns: 72px 28px 28px 89px 147px; }
.r3 { grid-template-columns: 72px 28px 28px 89px 30px 117px; }
.r4 { grid-template-columns: 134px 89px 66px 78px; }
.r5 { grid-template-columns: 72px 81px 28px 34px 66px 78px; }
.r6 { grid-template-columns: 133px 91px 66px 78px; }
.r7 { grid-template-columns: 68px 59px 96px 66px 78px; }
.r8 { grid-template-columns: 81px 45px 37px 56px 66px 78px; }
.k { color: #000; }
.b.dr { color: #800000; }
.b.rd { color: #ff0000; }
.b.nv { color: #000080; }
.b.gr { color: #008000; }
.b.pu { color: #800080; }
.b.gy { color: #a0a0a4; }
.b.bl { color: #0000ff; }
.b.it { font-style: italic; }

/* ruler */
.ruler {
  display: flex; height: 14px; background-color: #c0dcc0;
  background-image: linear-gradient(90deg, #222 1px, transparent 1px);
  background-size: 48.8px 3px; background-position: 0 bottom; background-repeat: repeat-x;
  font: bold 12px/13px "Liberation Sans", Arial, sans-serif;
}
.r0 { width: 24px; flex: none; padding-left: 1px; }
.rc { width: 244px; flex: none; text-align: center; }
.rl { flex: 1; text-align: right; }
.waterfall { display: block; width: 1125px; height: 119px; background: #000; }

/* seq */
.seq-panel { width: 626px; height: 35px; margin-top: 2px; padding: 2px 0 0 1px; }
.seq1 { display: grid; grid-template-columns: repeat(8, 74px); column-gap: 4px; height: 15px; }
.seq2 { display: grid; grid-template-columns: 53px 65px 58px 58px repeat(4, 78px) 74px; height: 16px; }
.seq2 .b { margin-right: 4px; }
.seq2 .b:nth-child(-n+3) { margin-right: 9px; }
.seq2 .b:nth-child(4) { margin-right: 5px; }
.seq2 .b:last-child { margin-right: 0; }
.b.seq { font: 12px/10px "Liberation Mono", "Courier New", monospace; padding-top: 1px; }

/* side panel */
.side { margin-left: auto; margin-right: 12px; padding-top: 164px; width: 160px; }
.side-box {
  width: 160px; height: 107px; padding: 1px 0 0 1px;
  border: 1px solid; border-color: #fff #a0a0a4 #a0a0a4 #fff;
  background: #a6caf0; display: flex; flex-direction: column;
}
.s1 { display: grid; grid-template-columns: 55px 72px 31px; height: 16px; }
.s1 .b:first-child { letter-spacing: -.3px; }
.s2 { display: grid; grid-template-columns: 34px 35px 46px 43px; height: 16px; }
.s3 { display: grid; grid-template-columns: 34px 33px 30px 55px; justify-content: space-between; height: 15px; width: 158px; }
.s4 { display: grid; grid-template-columns: 42px 114px; column-gap: 2px; height: 28px; }
.band-grp { background: #c0dcc0; height: 26px; margin-top: 1px; }
.band-grp > legend { font-size: 11px; line-height: 9px; margin-left: 8px; background: transparent; }
.band-radios { gap: 4px; padding: 0 0 0 3px; }
.band-radios .radio { margin-left: 3px; }
.band-radios .radio:first-child { margin-left: 0; }
.lock { height: 27px; }
.s5 { display: flex; height: 29px; }
.color-block { width: 42px; flex: none; }
.cap { display: block; text-align: center; font: 11.500px/11px "Liberation Sans", Arial, sans-serif; white-space: nowrap; }
.color-row { display: flex; height: 18px; }
.spin { width: 22px; display: grid; grid-template-rows: 9px 9px; flex: none; }
.ten { flex: 1; }
.agc { width: 30px; margin: 2px 0 0 2px; height: 27px; flex: none; }
.grey { width: 30px; margin: 2px 0 0 2px; height: 27px; flex: none; }
.freq-block { width: 53px; flex: none; }
.freq-btns { display: grid; grid-template-columns: 27px 26px; height: 18px; }

/* memos */
.memo { display: flex; width: 1909px; background: #fff; flex: none; }
.memo-body { flex: 1; min-width: 0; border-top: 2px solid #a0a0a4; border-left: 2px solid #a0a0a4; margin: 0; }
.input-memo { height: 32px; }
.caret { display: block; width: 1px; height: 13px; margin: 3px 0 0 1px; background: #000; }
.log-memo { height: 623px; margin-top: 2px; }
.log {
  font: bold 11px/13px "Noto Sans", sans-serif; white-space: pre;
  padding: 1px 0 0 1px; letter-spacing: .1px;
}
.nsv { letter-spacing: -.25px; }
.garb { letter-spacing: .22px; }
.scroll {
  width: 17px; flex: none; background: #f0f0f0; border-top: 2px solid #a0a0a4;
  display: flex; flex-direction: column; justify-content: space-between; align-items: center;
}
.input-scroll { padding: 5px 0 5px; }
.log-scroll { padding: 6px 0 6px; }

/* bottom bar */
.bottom-bar {
  width: 767px; height: 18px; margin: 3px 0 0 2px; padding: 1px 0 0 0; flex: none;
  display: grid; grid-template-columns: 67px 45px 39px 37px 15px 37px 44px 41px 27px 28px 27px 49px 28px 143px 70px 65px;
  background: #a6caf0;
}
.bottom-bar .b.plain { font-size: 11px; }
.bottom-bar .b.big2 { font-size: 15px; }
.height-lbl { font: 12px/15px "Liberation Sans", Arial, sans-serif; text-align: center; }
.h-spin { display: grid; grid-template-rows: 8px 8px; width: 24px; }
.plainval { font: 12px/12px "Liberation Sans", Arial, sans-serif; }
.val.date { font-size: 13px; }
.val.spot { font-size: 12px; }

/* taskbar */
.taskbar { height: 40px; margin-top: 4px; flex: none; background: #45452f; display: flex; align-items: stretch; color: #eee; }
.start { width: 48px; display: flex; align-items: center; justify-content: center; flex: none; }
.search { width: 288px; flex: none; background: #333; border: 1px solid #5a5a5a; border-bottom: 0; display: flex; align-items: center; padding-left: 12px; }
.search-text { margin-left: 10px; font: 14.500px "Noto Sans", sans-serif; color: #cfcfcf; }
.owl { margin-left: auto; margin-right: 8px; }
.tview { width: 50px; display: flex; align-items: center; justify-content: center; flex: none; }
.slot { width: 49px; flex: none; display: flex; align-items: center; justify-content: center; position: relative; }
.slot::after { content: ""; position: absolute; left: 5px; right: 4px; bottom: 0; height: 2px; background: #76b9ed; }
.slot.active { background: #6c6c5e; }
.slot.active::after { left: 0; right: 0; }
.onenote { font: bold 11px "Liberation Sans", sans-serif; fill: #fff; }
.tee { font: bold 14px "Liberation Sans", sans-serif; fill: #1010c0; }
.tray { margin-left: auto; display: flex; align-items: center; padding-right: 18px; }
.tray svg { flex: none; }
.t-up { margin-right: 14px; }
.t-cam { margin-right: 11px; }
.t-mic { margin-right: 9px; }
.t-rec { margin-right: 8px; }
.t-bat { margin-right: 9px; }
.t-wifi { margin-right: 7px; }
.t-vol { margin-right: 8px; }
.t-lang { font: 12px "Noto Sans", sans-serif; margin-right: 10px; }
.t-clock { display: flex; flex-direction: column; align-items: center; gap: 3px; font: 12px/14px "Noto Sans", sans-serif; margin-right: 16px; width: 62px; }
.t-note { position: relative; width: 20px; height: 24px; }
.badge {
  position: absolute; left: 6px; top: 11px; width: 14px; height: 14px; border-radius: 50%;
  background: #333; border: 1px solid #ddd; color: #fff; font: bold 9px/12px "Noto Sans", sans-serif; text-align: center;
}
```
FILE: waterfall.js
```js
(function () {
  var canvas = document.getElementById('wf');
  var ctx = canvas.getContext('2d');
  var W = canvas.width, H = canvas.height;
  var img = ctx.createImageData(W, H);
  var CX = 870.4, PERIOD = 15.13;

  function lerp(a, b, t) { return a + (b - a) * t; }
  function hash(a, b) {
    var s = Math.sin(a * 127.1 + b * 311.7) * 43758.5453;
    return s - Math.floor(s);
  }
  var AMP_L = [[0, .95], [15, .76], [30, .74], [45, .66], [60, .47], [75, .42], [90, .34], [120, .3], [270, .2], [400, .1], [470, .06], [670, .03], [880, .02]];
  var AMP_R = [[0, .95], [15, .76], [30, .74], [45, .66], [60, .47], [75, .42], [90, .34], [120, .3], [255, .2]];
  function amp(dx) {
    var t = dx < 0 ? AMP_L : AMP_R, d = Math.abs(dx);
    for (var i = 1; i < t.length; i++) {
      if (d <= t[i][0]) return lerp(t[i - 1][1], t[i][1], (d - t[i - 1][0]) / (t[i][0] - t[i - 1][0]));
    }
    return t[t.length - 1][1];
  }
  var STOPS = [[0, 0, 0, 0], [.08, 0, 0, 110], [.3, 0, 0, 255], [.45, 120, 120, 170], [.62, 255, 255, 0], [.82, 255, 230, 0], [.9, 255, 130, 0], [1, 255, 20, 0]];
  function color(v) {
    if (v <= 0) return [0, 0, 0];
    if (v >= 1) v = 1;
    for (var i = 1; i < STOPS.length; i++) {
      if (v <= STOPS[i][0]) {
        var t = (v - STOPS[i - 1][0]) / (STOPS[i][0] - STOPS[i - 1][0]);
        return [lerp(STOPS[i - 1][1], STOPS[i][1], t), lerp(STOPS[i - 1][2], STOPS[i][2], t), lerp(STOPS[i - 1][3], STOPS[i][3], t)];
      }
    }
    return [0, 0, 0];
  }
  function sample(x, y) {
    var kf = (x - CX) / PERIOD, k = Math.round(kf);
    var sc = CX + k * PERIOD, d = Math.abs(x - sc);
    var A = amp(sc - CX);
    var dc = Math.abs(x - CX);
    if (y >= 55 && y < 66) {
      if (dc < 3) return .86;
      if (dc < 24 && (y === 55 || y === 65)) return .82;
      if ((y === 55 || y === 65) && dc < 170 && d > 4) return A * .45;
      return 0;
    }
    if ((y >= 49 && y < 55) || (y >= 66 && y < 71)) {
      if (d <= 2) return Math.max(A * 1.08, .11);
      return 0;
    }
    if (dc < 24) {
      var h = hash(x, y);
      if (h > .93) return .3;
      if (dc < 9) return h < .3 ? 1 : (h < .6 ? .9 : .8);
      return h < .12 ? .9 : .7;
    }
    if (A < .14) {
      if (hash(k, Math.floor(y / 3)) > A * 7) return 0;
      return d <= 1.5 + (y % 2) ? Math.max(A, .09) : 0;
    }
    var w = (A < .26 ? 3.6 : 4.6) + .9 * Math.sin(y * .9 + k * .7);
    if (y % 8 === 3) w *= .5;
    if (d > w) return 0;
    var r = (y % 2 === 1) ? .42 : 1;
    if (y > 72 && y % 7 < 2 && d < 1.6) r = .25;
    if (hash(k * 3 + x, y) > .85) r *= .5;
    return A * r * (1 - .3 * (d / w) * (d / w));
  }
  for (var y = 0; y < H; y++) {
    for (var x = 0; x < W; x++) {
      var c = color(sample(x, y));
      if (x >= 869 && x <= 871 && y >= 8) c = [255, 0, 200];
      var i = (y * W + x) * 4;
      img.data[i] = c[0]; img.data[i + 1] = c[1]; img.data[i + 2] = c[2]; img.data[i + 3] = 255;
    }
  }
  ctx.putImageData(img, 0, 0);
})();
```
